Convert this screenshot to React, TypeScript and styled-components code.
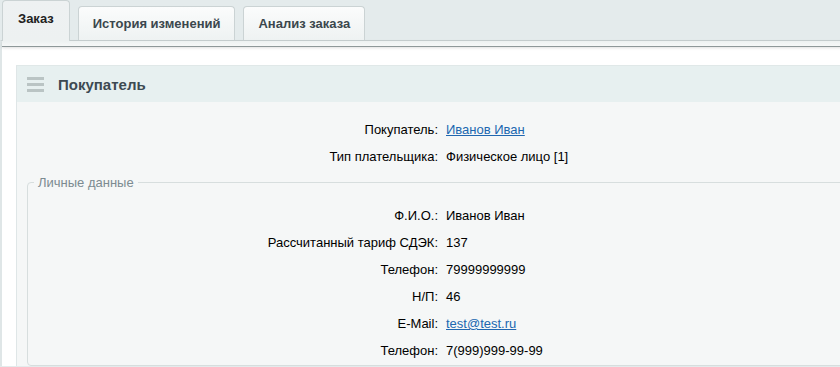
import styled, { createGlobalStyle } from "styled-components";

const GlobalStyle = createGlobalStyle`
  html, body {
    margin: 0;
    padding: 0;
    overflow: hidden;
    background: #e4ebec;
  }
  body {
    font-family: "Liberation Sans", Arial, sans-serif;
    font-size: 13px;
    color: #000;
  }
`;

const Page = styled.div`
  width: 880px;
`;

const TabBar = styled.div`
  display: flex;
  align-items: flex-end;
  gap: 8px;
  height: 40px;
  padding-left: 2px;
  position: relative;
  z-index: 1;
`;

const Tab = styled.div<{ $active?: boolean }>`
  box-sizing: border-box;
  height: ${(p) => (p.$active ? "41px" : "34px")};
  margin-bottom: ${(p) => (p.$active ? "-1px" : "0")};
  padding: 0 ${(p) => (p.$active ? "15px" : "14px")};
  display: flex;
  align-items: center;
  padding-bottom: ${(p) => (p.$active ? "5px" : "0")};
  border: 1px solid #cbd3d4;
  border-bottom: none;
  border-radius: 4px 4px 0 0;
  background: ${(p) =>
    p.$active
      ? "linear-gradient(#eef1f2, #edf1f1)"
      : "linear-gradient(#fbfcfc, #eef2f2)"};
  font-weight: bold;
  font-size: 13px;
  color: ${(p) => (p.$active ? "#222" : "#3b474d")};
`;

const Panel = styled.div`
  border-top: 1px solid #c8d0d1;
  border-left: 2px solid #dfe6e7;
  background: #fff;
`;

const PanelStrip = styled.div`
  height: 5px;
  background: linear-gradient(#edf1f1, #f6f8f8);
  border-bottom: 1px solid #8e9899;
  box-shadow: 0 1px 3px rgba(0, 0, 0, 0.12);
`;

const PanelBody = styled.div`
  padding: 18px 0 0 14px;
`;

const Section = styled.div`
  border-left: 1px solid #dfe6e7;
  border-top: 1px solid #e0e8e8;
  background: #f5f7f7;
`;

const SectionHeader = styled.div`
  display: flex;
  align-items: center;
  gap: 14px;
  height: 36px;
  padding-left: 10px;
  background: #e7f0f0;
`;

const Burger = styled.div`
  display: flex;
  flex-direction: column;
  gap: 3px;
  width: 17px;
  & > span {
    height: 3px;
    background: #bac4c4;
  }
`;

const SectionTitle = styled.div`
  font-weight: bold;
  font-size: 15px;
  color: #3d4a52;
`;

const SectionContent = styled.div`
  padding: 14px 0 0 10px;
`;

const Rows = styled.div<{ $label: number }>`
  display: grid;
  grid-template-columns: ${(p) => p.$label}px 1fr;
  column-gap: 8px;
  grid-auto-rows: 27px;
  align-items: center;
`;

const Label = styled.div`
  text-align: right;
`;

const Value = styled.div``;

const Link = styled.a`
  color: #2067b0;
  text-decoration: underline;
`;

const Fieldset = styled.fieldset`
  margin: 5px 0 0 0;
  padding: 12px 0 1px 0;
  border: 1px solid #d7dede;
  border-radius: 4px;
`;

const Legend = styled.legend`
  margin-left: 6px;
  padding: 0 4px;
  color: #7c8b91;
  font-size: 13px;
`;

type Row = { label: string; value: string; link?: boolean };

const buyer: Row[] = [
  { label: "Покупатель:", value: "Иванов Иван", link: true },
  { label: "Тип плательщика:", value: "Физическое лицо [1]" },
];

const personal: Row[] = [
  { label: "Ф.И.О.:", value: "Иванов Иван" },
  { label: "Рассчитанный тариф СДЭК:", value: "137" },
  { label: "Телефон:", value: "79999999999" },
  { label: "Н/П:", value: "46" },
  { label: "E-Mail:", value: "test@test.ru", link: true },
  { label: "Телефон:", value: "7(999)999-99-99" },
];

const renderRows = (rows: Row[]) =>
  rows.map((r, i) => [
    <Label key={"l" + i}>{r.label}</Label>,
    <Value key={"v" + i}>{r.link ? <Link href="#">{r.value}</Link> : r.value}</Value>,
  ]);

export default function App() {
  return (
    <Page>
      <GlobalStyle />
      <TabBar>
        <Tab $active>Заказ</Tab>
        <Tab>История изменений</Tab>
        <Tab>Анализ заказа</Tab>
      </TabBar>
      <Panel>
        <PanelStrip />
        <PanelBody>
          <Section>
            <SectionHeader>
              <Burger>
                <span />
                <span />
                <span />
              </Burger>
              <SectionTitle>Покупатель</SectionTitle>
            </SectionHeader>
            <SectionContent>
              <Rows $label={411}>{renderRows(buyer)}</Rows>
              <Fieldset>
                <Legend>Личные данные</Legend>
                <Rows $label={410}>{renderRows(personal)}</Rows>
              </Fieldset>
            </SectionContent>
          </Section>
        </PanelBody>
      </Panel>
    </Page>
  );
}
